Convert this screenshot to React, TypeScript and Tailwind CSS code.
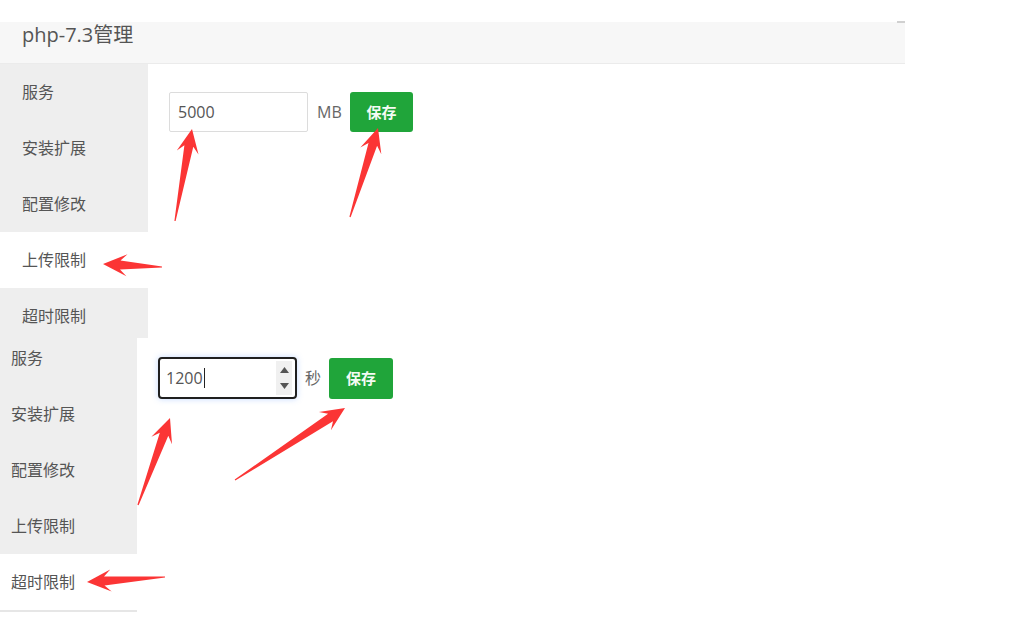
import React from 'react';

const MENU = ['服务', '安装扩展', '配置修改', '上传限制', '超时限制'];

type Pt = [number, number];

// red annotation arrows: [tail, tip]
const ARROWS: [Pt, Pt][] = [
  [[175, 221], [192, 129]],
  [[350, 217], [378, 128]],
  [[162, 267], [103, 264]],
  [[138, 505], [170, 418]],
  [[235, 480], [345, 408]],
  [[165, 577], [87, 582]],
];

function arrowPoints([t, h]: [Pt, Pt]) {
  const dx = h[0] - t[0];
  const dy = h[1] - t[1];
  const len = Math.hypot(dx, dy);
  const ux = dx / len;
  const uy = dy / len;
  const nx = -uy;
  const ny = ux;
  const headLen = 24;
  const headHalf = 11;
  const neckHalf = 4.5;
  const at = (back: number, side: number): string =>
    `${(h[0] - ux * back + nx * side).toFixed(1)},${(h[1] - uy * back + ny * side).toFixed(1)}`;
  return [
    at(len, 0.6),
    at(headLen * 0.72, neckHalf),
    at(headLen, headHalf),
    at(0, 0),
    at(headLen, -headHalf),
    at(headLen * 0.72, -neckHalf),
    at(len, -0.6),
  ].join(' ');
}

function SaveButton({ className }: { className: string }) {
  return (
    <button className={`bg-[#20a53a] text-[#f4fbf4] font-bold text-[15px] rounded-[3px] flex items-center justify-center ${className}`}>
      保存
    </button>
  );
}

export default function App() {
  return (
    <div className="relative w-[1024px] h-[618px] overflow-hidden bg-white text-[#555] font-['Open_Sans','Noto_Sans_CJK_SC',sans-serif]">
      {/* first panel: upload limit */}
      <div className="mt-[22px] w-[905px]">
        <div className="h-[42px] bg-[#f7f7f7] border-b border-[#ebebeb] pl-[22px] text-[20px] leading-[26px] text-[#555]">
          php-7.3管理
        </div>
        <div className="flex h-[274px]">
          <div className="w-[148px] bg-[#eeeeee] overflow-hidden">
            {MENU.map((m, i) => (
              <div
                key={m}
                className={`h-[56px] shrink-0 flex items-center pl-[22px] text-[16px] ${i === 3 ? 'bg-white' : ''}`}
              >
                {m}
              </div>
            ))}
          </div>
          <div className="flex-1 pl-[21px] pt-[28px]">
            <div className="flex items-center">
              <div className="w-[139px] h-[40px] border border-[#dcdcdc] rounded-[2px] flex items-center pl-[8px] text-[16px] text-[#555]">
                5000
              </div>
              <span className="ml-[9px] text-[16px] text-[#666] w-[33px]">MB</span>
              <SaveButton className="w-[63px] h-[40px]" />
            </div>
          </div>
        </div>
      </div>

      {/* second panel: timeout limit */}
      <div className="flex h-[274px]">
        <div className="w-[137px] bg-[#eeeeee] overflow-hidden">
          <div className="mt-[-8px]">
            {MENU.map((m, i) => (
              <div
                key={m}
                className={`h-[56px] flex items-center pl-[11px] text-[16px] ${i === 4 ? 'bg-white' : ''}`}
              >
                {m}
              </div>
            ))}
            <div className="h-[2px] bg-[#e6e6e6]" />
          </div>
        </div>
        <div className="flex-1 pl-[21px] pt-[19px]">
          <div className="flex items-start">
            <div className="w-[139px] h-[42px] border-2 border-[#1f1f1f] rounded-[4px] shadow-[0_0_6px_rgba(90,150,255,0.35)] flex items-center">
              <div className="flex-1 flex items-center pl-[6px] text-[16px] text-[#555]">
                1200
                <span className="w-px h-[20px] bg-[#222] ml-[1px]" />
              </div>
              <div className="w-[16px] h-[34px] mr-[3px] bg-[#f0f0f0] flex flex-col items-center justify-between py-[6px]">
                <svg width="9" height="6" viewBox="0 0 9 6"><path d="M0 6 L4.5 0 L9 6 Z" fill="#555" /></svg>
                <svg width="9" height="6" viewBox="0 0 9 6"><path d="M0 0 L4.5 6 L9 0 Z" fill="#555" /></svg>
              </div>
            </div>
            <span className="ml-[8px] mt-[9px] text-[16px] text-[#666] w-[24px]">秒</span>
            <SaveButton className="w-[64px] h-[41px] mt-[1px]" />
          </div>
        </div>
      </div>

      {/* annotations */}
      <svg className="absolute inset-0 pointer-events-none" width="1024" height="618">
        {ARROWS.map((a, i) => (
          <polygon key={i} points={arrowPoints(a)} fill="#fb3535" />
        ))}
        <rect x="897" y="21" width="8" height="2" fill="#d0d0d0" />
      </svg>
    </div>
  );
}
